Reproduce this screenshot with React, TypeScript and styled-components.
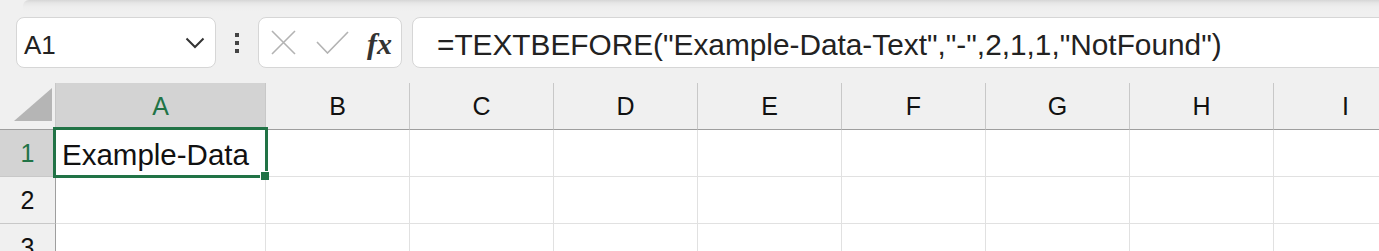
import React from "react";
import styled, { createGlobalStyle } from "styled-components";

const GlobalStyle = createGlobalStyle`
  html, body {
    margin: 0;
    padding: 0;
    background: #f0f0f0;
    overflow: hidden;
  }
  body {
    font-family: "Liberation Sans", Arial, sans-serif;
  }
`;

const Page = styled.div`
  width: 1379px;
  height: 251px;
  overflow: hidden;
  background: #f0f0f0;
`;

const TopShade = styled.div`
  height: 17px;
  margin-left: 23px;
  border-top-left-radius: 6px;
  background: linear-gradient(#d6d6d6 0px, #e6e6e6 3px, #eeeeee 7px, #f0f0f0 12px);
`;

const Toolbar = styled.div`
  height: 51px;
  display: flex;
  align-items: stretch;
  padding-left: 16px;
`;

const Box = styled.div`
  background: #ffffff;
  border: 1px solid #d6d6d6;
  border-radius: 8px;
  box-sizing: border-box;
  display: flex;
  align-items: center;
`;

const NameBox = styled(Box)`
  width: 200px;
  padding: 0 10px 0 7px;
  justify-content: space-between;
  font-size: 26px;
  color: #222;
`;

const NameText = styled.span`
  padding-top: 5px;
`;

const Grip = styled.div`
  width: 42px;
  display: flex;
  flex-direction: column;
  align-items: center;
  justify-content: center;
  gap: 4px;
`;

const GripDot = styled.span`
  width: 4px;
  height: 4px;
  background: #444;
`;

const ActionBox = styled(Box)`
  width: 144px;
  padding-left: 12px;
  gap: 20px;
`;

const Fx = styled.span`
  font-family: "Liberation Serif", "Times New Roman", serif;
  font-style: italic;
  font-weight: bold;
  font-size: 30px;
  color: #333;
  margin-left: -2px;
  padding-top: 2px;
`;

const FormulaBox = styled(Box)`
  flex: 1;
  margin-left: 10px;
  margin-right: -20px;
  padding-left: 24px;
  font-size: 29.8px;
  color: #222;
  white-space: nowrap;
`;

const FormulaText = styled.span`
  padding-top: 4px;
`;

const Sheet = styled.div`
  margin-top: 15px;
  display: grid;
  grid-template-columns: 56px 210px repeat(8, 144px);
  grid-template-rows: repeat(4, 47px);
`;

const Corner = styled.div`
  background: #f0f0f0;
  border-right: 1px solid #c8c8c8;
  border-bottom: 1px solid #9e9e9e;
  display: flex;
  align-items: flex-end;
  justify-content: flex-end;
  padding: 0 3px 8px 0;
`;

const CornerTriangle = styled.div`
  width: 38px;
  height: 33px;
  background: #b5b5b5;
  clip-path: polygon(100% 0, 100% 100%, 0 100%);
`;

const ColHeader = styled.div<{ $active?: boolean }>`
  background: ${(p) => (p.$active ? "#d3d3d3" : "#f0f0f0")};
  color: ${(p) => (p.$active ? "#217346" : "#111")};
  border-right: 1px solid #c8c8c8;
  border-bottom: 1px solid #9e9e9e;
  display: flex;
  align-items: center;
  justify-content: center;
  font-size: 25px;
`;

const RowHeader = styled.div<{ $active?: boolean }>`
  background: ${(p) => (p.$active ? "#d3d3d3" : "#f0f0f0")};
  color: ${(p) => (p.$active ? "#217346" : "#111")};
  border-right: 1px solid #9e9e9e;
  border-bottom: 1px solid #c8c8c8;
  display: flex;
  align-items: center;
  justify-content: center;
  font-size: 25px;
`;

const Cell = styled.div`
  position: relative;
  background: #ffffff;
  border-right: 1px solid #e1e1e1;
  border-bottom: 1px solid #e1e1e1;
  display: flex;
  align-items: center;
  padding-left: 6px;
  font-size: 29.5px;
  color: #111;
  white-space: nowrap;
`;

const CellText = styled.span`
  padding-top: 4px;
`;

// drawn over the neighbouring cells, so it needs its own layer
const Selection = styled.div`
  position: absolute;
  z-index: 2;
  left: -3px;
  top: -3px;
  width: 215px;
  height: 51px;
  box-sizing: border-box;
  border: 3px solid #217346;
  pointer-events: none;
`;

const FillHandle = styled.div`
  position: absolute;
  right: -4px;
  bottom: -5px;
  width: 9px;
  height: 9px;
  box-sizing: border-box;
  background: #217346;
  border-top: 1px solid #ffffff;
  border-left: 1px solid #ffffff;
`;

const columns = ["A", "B", "C", "D", "E", "F", "G", "H", "I"];
const rows = [1, 2, 3];

function ChevronIcon() {
  return (
    <svg width="20" height="12" viewBox="0 0 20 12">
      <path d="M1.5 1.5 L10 10 L18.5 1.5" fill="none" stroke="#333" strokeWidth="2" />
    </svg>
  );
}

function CancelIcon() {
  return (
    <svg width="25" height="25" viewBox="0 0 25 25">
      <path d="M1 1 L24 24 M24 1 L1 24" fill="none" stroke="#b3b3b3" strokeWidth="1.6" />
    </svg>
  );
}

function EnterIcon() {
  return (
    <svg width="33" height="23" viewBox="0 0 33 23">
      <path d="M1 11 L11.5 22 L32 1" fill="none" stroke="#b3b3b3" strokeWidth="1.6" />
    </svg>
  );
}

export default function App() {
  return (
    <Page>
      <GlobalStyle />
      <TopShade />
      <Toolbar>
        <NameBox>
          <NameText>A1</NameText>
          <ChevronIcon />
        </NameBox>
        <Grip>
          <GripDot />
          <GripDot />
          <GripDot />
        </Grip>
        <ActionBox>
          <CancelIcon />
          <EnterIcon />
          <Fx>fx</Fx>
        </ActionBox>
        <FormulaBox>
          <FormulaText>=TEXTBEFORE("Example-Data-Text","-",2,1,1,"NotFound")</FormulaText>
        </FormulaBox>
      </Toolbar>
      <Sheet>
        <Corner>
          <CornerTriangle />
        </Corner>
        {columns.map((c) => (
          <ColHeader key={c} $active={c === "A"}>
            {c}
          </ColHeader>
        ))}
        {rows.map((r) => (
          <React.Fragment key={r}>
            <RowHeader $active={r === 1}>{r}</RowHeader>
            {columns.map((c) => (
              <Cell key={c + r}>
                {r === 1 && c === "A" && (
                  <>
                    <CellText>Example-Data</CellText>
                    <Selection>
                      <FillHandle />
                    </Selection>
                  </>
                )}
              </Cell>
            ))}
          </React.Fragment>
        ))}
      </Sheet>
    </Page>
  );
}
